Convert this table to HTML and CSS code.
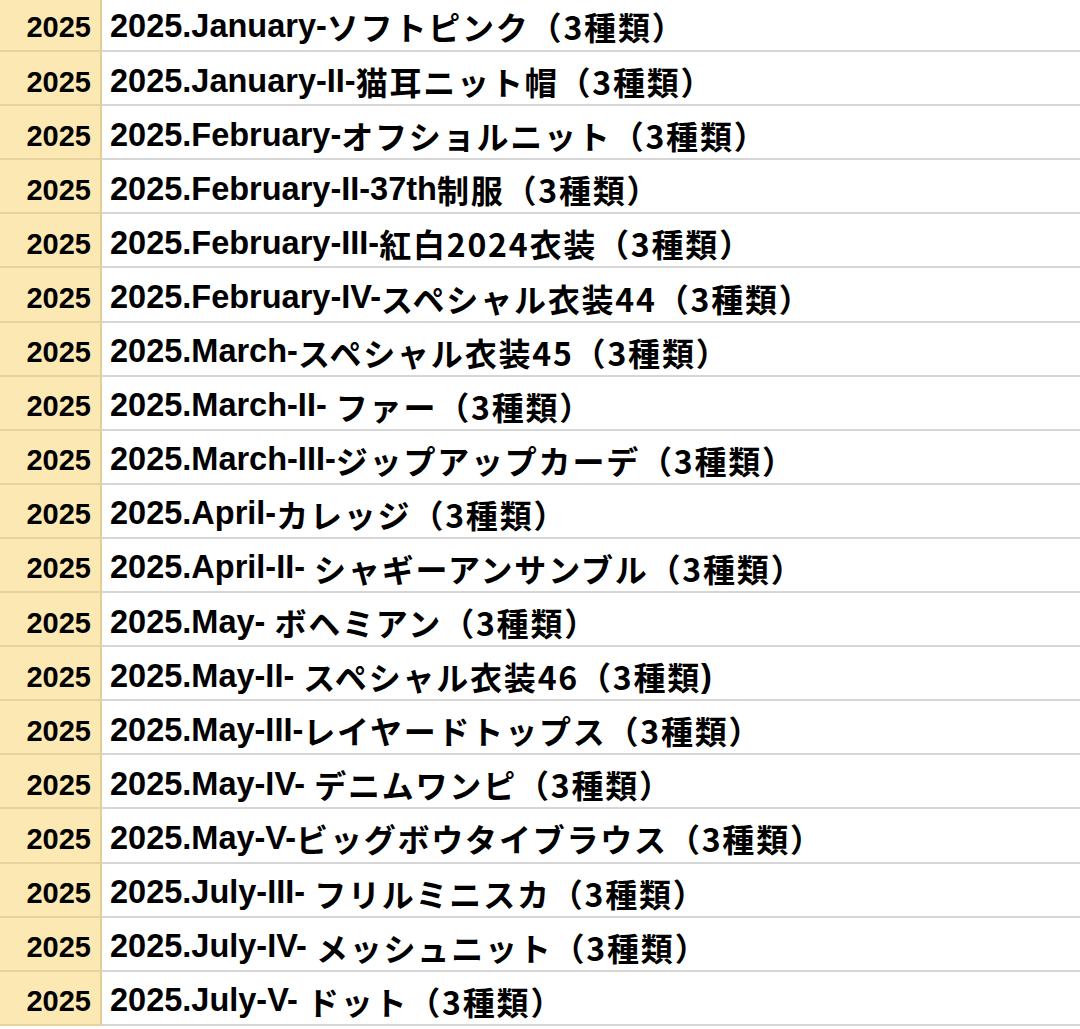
FILE: index.html
```html
<!DOCTYPE html>
<html lang="ja">
<head>
<meta charset="utf-8">
<link rel="stylesheet" href="styles.css">
</head>
<body>
<div class="sheet">
  <div class="row"><div class="year">2025</div><div class="name">2025.January-<span class="jp">ソフトピンク（3種類）</span></div></div>
  <div class="row"><div class="year">2025</div><div class="name">2025.January-II-<span class="jp">猫耳ニット帽（3種類）</span></div></div>
  <div class="row"><div class="year">2025</div><div class="name">2025.February-<span class="jp">オフショルニット（3種類）</span></div></div>
  <div class="row"><div class="year">2025</div><div class="name">2025.February-II-37th<span class="jp">制服（3種類）</span></div></div>
  <div class="row"><div class="year">2025</div><div class="name">2025.February-III-<span class="jp">紅白2024衣装（3種類）</span></div></div>
  <div class="row"><div class="year">2025</div><div class="name">2025.February-IV-<span class="jp">スペシャル衣装44（3種類）</span></div></div>
  <div class="row"><div class="year">2025</div><div class="name">2025.March-<span class="jp">スペシャル衣装45（3種類）</span></div></div>
  <div class="row"><div class="year">2025</div><div class="name">2025.March-II- <span class="jp">ファー（3種類）</span></div></div>
  <div class="row"><div class="year">2025</div><div class="name">2025.March-III-<span class="jp">ジップアップカーデ（3種類）</span></div></div>
  <div class="row"><div class="year">2025</div><div class="name">2025.April-<span class="jp">カレッジ（3種類）</span></div></div>
  <div class="row"><div class="year">2025</div><div class="name">2025.April-II- <span class="jp">シャギーアンサンブル（3種類）</span></div></div>
  <div class="row"><div class="year">2025</div><div class="name">2025.May- <span class="jp">ボヘミアン（3種類）</span></div></div>
  <div class="row"><div class="year">2025</div><div class="name">2025.May-II- <span class="jp">スペシャル衣装46（3種類</span>)</div></div>
  <div class="row"><div class="year">2025</div><div class="name">2025.May-III-<span class="jp">レイヤードトップス（3種類）</span></div></div>
  <div class="row"><div class="year">2025</div><div class="name">2025.May-IV- <span class="jp">デニムワンピ（3種類）</span></div></div>
  <div class="row"><div class="year">2025</div><div class="name">2025.May-V-<span class="jp">ビッグボウタイブラウス（3種類）</span></div></div>
  <div class="row"><div class="year">2025</div><div class="name">2025.July-III- <span class="jp">フリルミニスカ（3種類）</span></div></div>
  <div class="row"><div class="year">2025</div><div class="name">2025.July-IV- <span class="jp">メッシュニット（3種類）</span></div></div>
  <div class="row"><div class="year">2025</div><div class="name">2025.July-V- <span class="jp">ドット（3種類）</span></div></div>
</div>
</body>
</html>
```

FILE: styles.css
```css
html, body {
  margin: 0;
  padding: 0;
  background: #ffffff;
}

body {
  font-family: "Liberation Sans", "Noto Sans CJK JP", sans-serif;
  color: #000000;
  overflow: hidden;
}

.sheet {
  display: flex;
  flex-direction: column;
  width: 1080px;
}

.row {
  display: grid;
  grid-template-columns: 102px 1fr;
  height: 54.1px;
  box-sizing: border-box;
}

.row:first-child {
  height: 52.1px;
}

.year {
  background: #fce8b2;
  border-right: 2px solid #e3cf96;
  border-bottom: 2px solid #e6d29c;
  font-weight: 700;
  font-size: 29px;
  padding-right: 9px;
  display: flex;
  align-items: center;
  justify-content: flex-end;
  padding-top: 8px;
  box-sizing: border-box;
}

.row:first-child .year {
  padding-top: 4px;
}

.name {
  border-bottom: 2px solid #d6d6d6;
  font-weight: 700;
  font-size: 32.5px;
  padding-left: 8px;
  display: flex;
  align-items: center;
  white-space: pre;
  padding-top: 6px;
  box-sizing: border-box;
}

.row:first-child .name {
  padding-top: 2px;
}

.jp {
  font-family: "Noto Sans CJK JP", sans-serif;
  font-weight: 700;
  font-size: 32px;
  letter-spacing: 1.8px;
}
```
